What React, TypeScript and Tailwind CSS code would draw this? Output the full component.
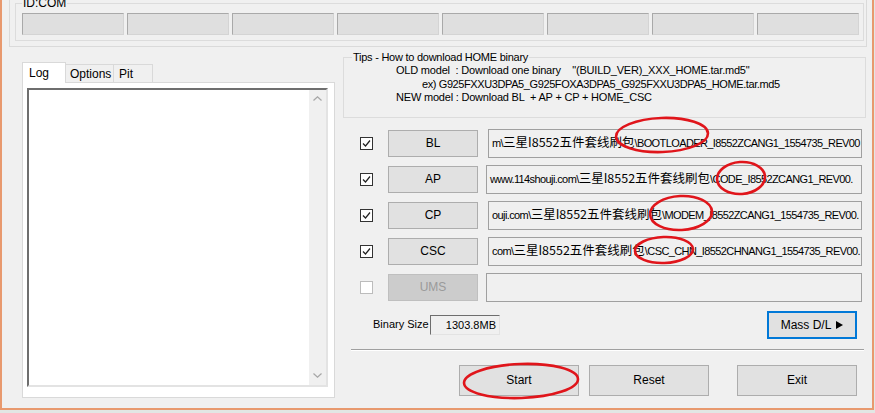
import type { ReactNode } from 'react';

const rows = [
  { label: 'BL', checked: true, wide: false, pre: 'm\\', post: '\\BOOTLOADER_I8552ZCANG1_1554735_REV00' },
  { label: 'AP', checked: true, wide: true, pre: 'www.114shouji.com\\', post: '\\CODE_I8552ZCANG1_REV00.' },
  { label: 'CP', checked: true, wide: false, pre: 'ouji.com\\', post: '\\MODEM_I8552ZCANG1_1554735_REV00.' },
  { label: 'CSC', checked: true, wide: false, pre: 'com\\', post: '\\CSC_CHN_I8552CHNANG1_1554735_REV00.' },
  { label: 'UMS', checked: false, wide: true, pre: '', post: '' },
];

function Checkbox({ checked }: { checked: boolean }) {
  return (
    <div
      className={
        'flex h-[13px] w-[13px] shrink-0 items-center justify-center border bg-white ' +
        (checked ? 'border-[#333333]' : 'border-[#bcbcbc]')
      }
    >
      {checked && (
        <svg width="11" height="11" viewBox="0 0 11 11">
          <polyline points="2,5.5 4.5,8 9,2.5" fill="none" stroke="#222" strokeWidth="1.2" />
        </svg>
      )}
    </div>
  );
}

function Button({ children, className = '', disabled = false }: { children: ReactNode; className?: string; disabled?: boolean }) {
  return (
    <div
      className={
        'flex shrink-0 items-center justify-center border text-[12px] ' +
        (disabled ? 'border-[#bfbfbf] bg-[#cccccc] text-[#9a9a9a] ' : 'border-[#adadad] bg-[#e1e1e1] text-black ') +
        className
      }
    >
      {children}
    </div>
  );
}

function TopPanel() {
  return (
    <div className="ml-[7px] h-[47px] w-[858px] border-x border-b border-[#dadada]">
      <fieldset className="-mt-[4px] ml-[5px] w-[849px] border border-[#dcdcdc] pb-[5px] pl-[6px] pt-[3px]">
        <legend className="px-[1px] text-[12px] leading-[14px]">ID:COM</legend>
        <div className="flex gap-[3px]">
          {Array.from({ length: 8 }).map((_, i) => (
            <div
              key={i}
              className="h-[22px] w-[102px] border border-b-[#d4d4d4] border-l-[#a9a9a9] border-r-[#d4d4d4] border-t-[#a9a9a9] bg-[#dfdfdf]"
            />
          ))}
        </div>
      </fieldset>
    </div>
  );
}

function LeftTabs() {
  return (
    <div className="ml-[20px] mt-[15px] w-[313px] shrink-0">
      <div className="flex h-[20px] items-end">
        <div className="relative z-10 -mb-px flex h-[21px] w-[44px] items-center border-x border-t border-[#d9d9d9] bg-white pl-[6px] text-[12px]">
          Log
        </div>
        <div className="flex h-[18px] w-[48px] items-center border-r border-t border-[#d9d9d9] pl-[4px] text-[12px]">
          Options
        </div>
        <div className="flex h-[18px] w-[39px] items-center border-r border-t border-[#d9d9d9] pl-[5px] text-[12px]">
          Pit
        </div>
      </div>
      <div className="h-[316px] w-[313px] border border-[#d9d9d9] bg-white pl-[4px] pt-[5px]">
        <div className="flex h-[299px] w-[301px] border-2 border-b-[#e3e3e3] border-l-[#6e6e6e] border-r-[#e3e3e3] border-t-[#6e6e6e] bg-white">
          <div className="flex-1" />
          <div className="flex w-[17px] flex-col items-center justify-between bg-[#f0f0f0] pb-[7px] pt-[6px]">
            <svg width="9" height="5" viewBox="0 0 9 5">
              <polyline points="0.5,4.5 4.5,0.8 8.5,4.5" fill="none" stroke="#a6a6a6" strokeWidth="1.2" />
            </svg>
            <svg width="9" height="5" viewBox="0 0 9 5">
              <polyline points="0.5,0.5 4.5,4.2 8.5,0.5" fill="none" stroke="#a6a6a6" strokeWidth="1.2" />
            </svg>
          </div>
        </div>
      </div>
    </div>
  );
}

function PathBox({ pre, post, wide }: { pre: string; post: string; wide: boolean }) {
  return (
    <div
      className={
        'h-[29px] shrink-0 overflow-hidden whitespace-nowrap border border-[#a0a0a0] bg-[#f0f0f0] pl-[3px] pt-[4px] text-[11px] leading-[16px] tracking-[-0.6px] ' +
        (wide ? 'ml-[8px] w-[376px]' : 'ml-[10px] w-[374px]')
      }
    >
      {pre && (
        <>
          <span>{pre}</span>
          <span className="font-['Noto_Sans_CJK_SC',sans-serif] text-[12.5px] tracking-[0px]">三星I8552五件套线刷包</span>
          <span>{post}</span>
        </>
      )}
    </div>
  );
}

function RightPanel() {
  return (
    <div className="ml-[8px] mt-[3px] w-[523px] shrink-0">
      <fieldset className="border border-[#dcdcdc] pb-[12px] pl-[8px]">
        <legend className="px-[1px] text-[11px] leading-[14px] tracking-[-0.25px]">Tips - How to download HOME binary</legend>
        <div className="whitespace-pre text-[11px] leading-[13.5px] tracking-[-0.2px]">
          <div className="pl-[44px]">{'OLD model  : Download one binary    "(BUILD_VER)_XXX_HOME.tar.md5"'}</div>
          <div className="pl-[70px] tracking-[-0.4px]">ex) G925FXXU3DPA5_G925FOXA3DPA5_G925FXXU3DPA5_HOME.tar.md5</div>
          <div className="pl-[44px]">NEW model : Download BL  + AP + CP + HOME_CSC</div>
        </div>
      </fieldset>

      <div className="mt-[11px] flex flex-col gap-[7px]">
        {rows.map((r) => (
          <div key={r.label} className="flex h-[29px] items-center pl-[17px]">
            <Checkbox checked={r.checked} />
            <Button className="ml-[15px] h-[27px] w-[90px]" disabled={!r.checked}>
              {r.label}
            </Button>
            <PathBox pre={r.pre} post={r.post} wide={r.wide} />
          </div>
        ))}
      </div>

      <div className="mt-[9px] flex h-[28px] items-center pl-[30px]">
        <div className="w-[57px] text-[11px]">Binary Size</div>
        <div className="h-[20px] w-[70px] border border-b-[#e3e3e3] border-l-[#6e6e6e] border-r-[#e3e3e3] border-t-[#6e6e6e] pr-[3px] text-right text-[11px] leading-[18px]">
          1303.8MB
        </div>
        <div className="ml-auto mr-[9px] flex h-[28px] w-[90px] items-center justify-center gap-[5px] border-2 border-[#0078d7] bg-[#e1e1e1] text-[12px]">
          <span>Mass D/L</span>
          <svg width="7" height="8" viewBox="0 0 7 8">
            <polygon points="0,0 7,4 0,8" fill="#000" />
          </svg>
        </div>
      </div>

      <div className="ml-[8px] mt-[10px] w-[513px] border-b border-t border-b-white border-t-[#a0a0a0]" />

      <div className="mt-[14px] flex pl-[116px]">
        <Button className="h-[31px] w-[120px]">Start</Button>
        <Button className="ml-[10px] h-[31px] w-[120px]">Reset</Button>
        <Button className="ml-[28px] h-[31px] w-[120px]">Exit</Button>
      </div>
    </div>
  );
}

function Marks() {
  const marks = [
    { cx: 662, cy: 135, rx: 46, ry: 17, r: -2 },
    { cx: 741, cy: 178, rx: 24, ry: 16, r: -4 },
    { cx: 681, cy: 213, rx: 31, ry: 17, r: -3 },
    { cx: 664, cy: 250, rx: 29, ry: 13, r: -2 },
    { cx: 521, cy: 381, rx: 57, ry: 17, r: -2 },
  ];
  return (
    <svg className="pointer-events-none absolute left-0 top-0" width="875" height="413" viewBox="0 0 875 413">
      {marks.map((m, i) => (
        <ellipse
          key={i}
          cx={m.cx}
          cy={m.cy}
          rx={m.rx}
          ry={m.ry}
          fill="none"
          stroke="#e0151b"
          strokeWidth="2.6"
          transform={`rotate(${m.r} ${m.cx} ${m.cy})`}
        />
      ))}
    </svg>
  );
}

export default function App() {
  return (
    <div className="relative h-[413px] w-[875px] overflow-hidden bg-[#e2e7e4] font-['Liberation_Sans','Noto_Sans_CJK_SC',sans-serif] text-black">
      <div className="flex h-[410px] w-[874px] flex-col border-x-2 border-b-2 border-[#e8996e] bg-[#f0f0f0]">
        <TopPanel />
        <div className="flex items-start">
          <LeftTabs />
          <RightPanel />
        </div>
      </div>
      <Marks />
    </div>
  );
}
